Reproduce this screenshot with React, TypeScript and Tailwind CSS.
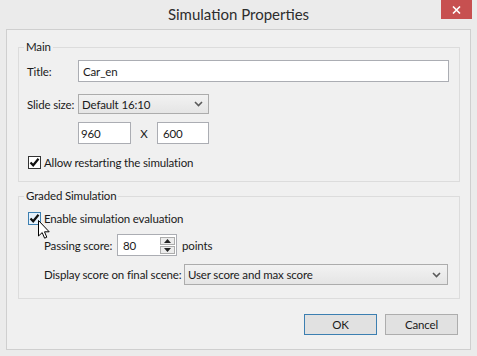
function Check({ hover = false }: { hover?: boolean }) {
  return (
    <div
      className={`w-[13px] h-[13px] border flex items-center justify-center shrink-0 ${
        hover ? "border-[#3c7fb1] bg-[#e5f1fb]" : "border-[#333333] bg-white"
      }`}
    >
      <svg width="11" height="11" viewBox="0 0 11 11">
        <path d="M1.5 5.5 L4.2 8.3 L9.5 1.8" fill="none" stroke="#111" strokeWidth="2.2" />
      </svg>
    </div>
  );
}

function Chevron() {
  return (
    <svg width="9" height="6" viewBox="0 0 9 6">
      <path d="M1 1 L4.5 4.5 L8 1" fill="none" stroke="#5a5a5a" strokeWidth="1.6" />
    </svg>
  );
}

export default function App() {
  return (
    <div className="w-[477px] h-[356px] bg-[#ebebeb] flex flex-col font-['Lato',sans-serif] text-[11.5px] tracking-[-0.15px] leading-[15px] text-[#1a1a1a] relative overflow-hidden">
      <div className="h-[29px] grid grid-cols-[1fr_auto_1fr] items-start">
        <div />
        <div className="text-[15px] tracking-normal leading-[29px] text-[#2d2d2d]">Simulation Properties</div>
        <div className="flex justify-end pr-[5px]">
          <div className="w-[31px] h-[19px] bg-[#c75050] flex items-center justify-center">
            <svg width="9" height="8" viewBox="0 0 9 8">
              <path d="M1 0.5 L8 7.5 M8 0.5 L1 7.5" stroke="white" strokeWidth="1.6" />
            </svg>
          </div>
        </div>
      </div>

      <div className="mx-[6px] h-[321px] border border-[#cfcfcf] bg-[#f0f0f0] flex flex-col">
        <fieldset className="mt-[9px] ml-[11px] mr-[10px] border border-[#dcdcdc] px-[8px] pt-[5px] pb-[11px]">
          <legend className="px-[2px] -ml-[3px] leading-[16px]">Main</legend>
          <div className="flex items-center">
            <div className="w-[51px] whitespace-nowrap">Title:</div>
            <div className="w-[371px] h-[22px] border border-[#abadb3] bg-white pl-[4px] flex items-center">Car_en</div>
          </div>
          <div className="flex items-center mt-[12px]">
            <div className="w-[51px] whitespace-nowrap">Slide size:</div>
            <div className="w-[131px] h-[20px] border border-[#acacac] bg-gradient-to-b from-[#f2f2f2] to-[#e5e5e5] flex items-center justify-between pl-[3px] pr-[5px]">
              <span>Default 16:10</span>
              <Chevron />
            </div>
          </div>
          <div className="flex items-center mt-[8px] ml-[51px]">
            <div className="w-[53px] h-[22px] border border-[#abadb3] bg-white pl-[2px] flex items-center">960</div>
            <div className="w-[26px] text-center">X</div>
            <div className="w-[52px] h-[22px] border border-[#abadb3] bg-white pl-[5px] flex items-center">600</div>
          </div>
          <div className="flex items-center mt-[11px] pl-[1px] gap-[3px]">
            <Check />
            <span>Allow restarting the simulation</span>
          </div>
        </fieldset>

        <fieldset className="mt-[6px] ml-[11px] mr-[10px] border border-[#dcdcdc] px-[8px] pt-[7px] pb-[13px]">
          <legend className="px-[2px] -ml-[3px] leading-[16px]">Graded Simulation</legend>
          <div className="flex items-center pl-[1px] gap-[3px]">
            <Check hover />
            <span>Enable simulation evaluation</span>
          </div>
          <div className="flex items-center mt-[8px] pl-[17px]">
            <div className="w-[73px] whitespace-nowrap">Passing score:</div>
            <div className="w-[60px] h-[22px] border border-[#abadb3] bg-white flex items-center justify-between pl-[5px] pr-[1px]">
              <span>80</span>
              <div className="flex flex-col gap-[1px]">
                <div className="w-[15px] h-[8px] border border-[#acacac] bg-[#ececec] flex items-center justify-center">
                  <svg width="7" height="4" viewBox="0 0 7 4"><path d="M0 4 L3.5 0 L7 4 Z" fill="#222" /></svg>
                </div>
                <div className="w-[15px] h-[8px] border border-[#acacac] bg-[#ececec] flex items-center justify-center">
                  <svg width="7" height="4" viewBox="0 0 7 4"><path d="M0 0 L3.5 4 L7 0 Z" fill="#222" /></svg>
                </div>
              </div>
            </div>
            <span className="ml-[5px]">points</span>
          </div>
          <div className="flex items-center mt-[8px] pl-[17px]">
            <div className="w-[140px] whitespace-nowrap">Display score on final scene:</div>
            <div className="w-[264px] h-[21px] border border-[#acacac] bg-gradient-to-b from-[#f2f2f2] to-[#e5e5e5] flex items-center justify-between pl-[3px] pr-[6px]">
              <span>User score and max score</span>
              <Chevron />
            </div>
          </div>
        </fieldset>

        <div className="flex justify-end gap-[8px] mt-[15px] pr-[12px]">
          <button className="w-[73px] h-[21px] border border-[#3c7fb1] bg-[#e1e1e1] flex items-center justify-center">OK</button>
          <button className="w-[73px] h-[21px] border border-[#adadad] bg-[#e1e1e1] flex items-center justify-center">Cancel</button>
        </div>
      </div>

      <svg className="absolute left-[38px] top-[220px]" width="12" height="19" viewBox="0 0 12 19">
        <path d="M0.5 0.5 L0.5 16 L4.2 12.6 L6.6 18.2 L8.8 17.2 L6.5 11.8 L11.2 11.8 Z" fill="white" stroke="black" strokeWidth="1" strokeLinejoin="round" />
      </svg>
    </div>
  );
}
